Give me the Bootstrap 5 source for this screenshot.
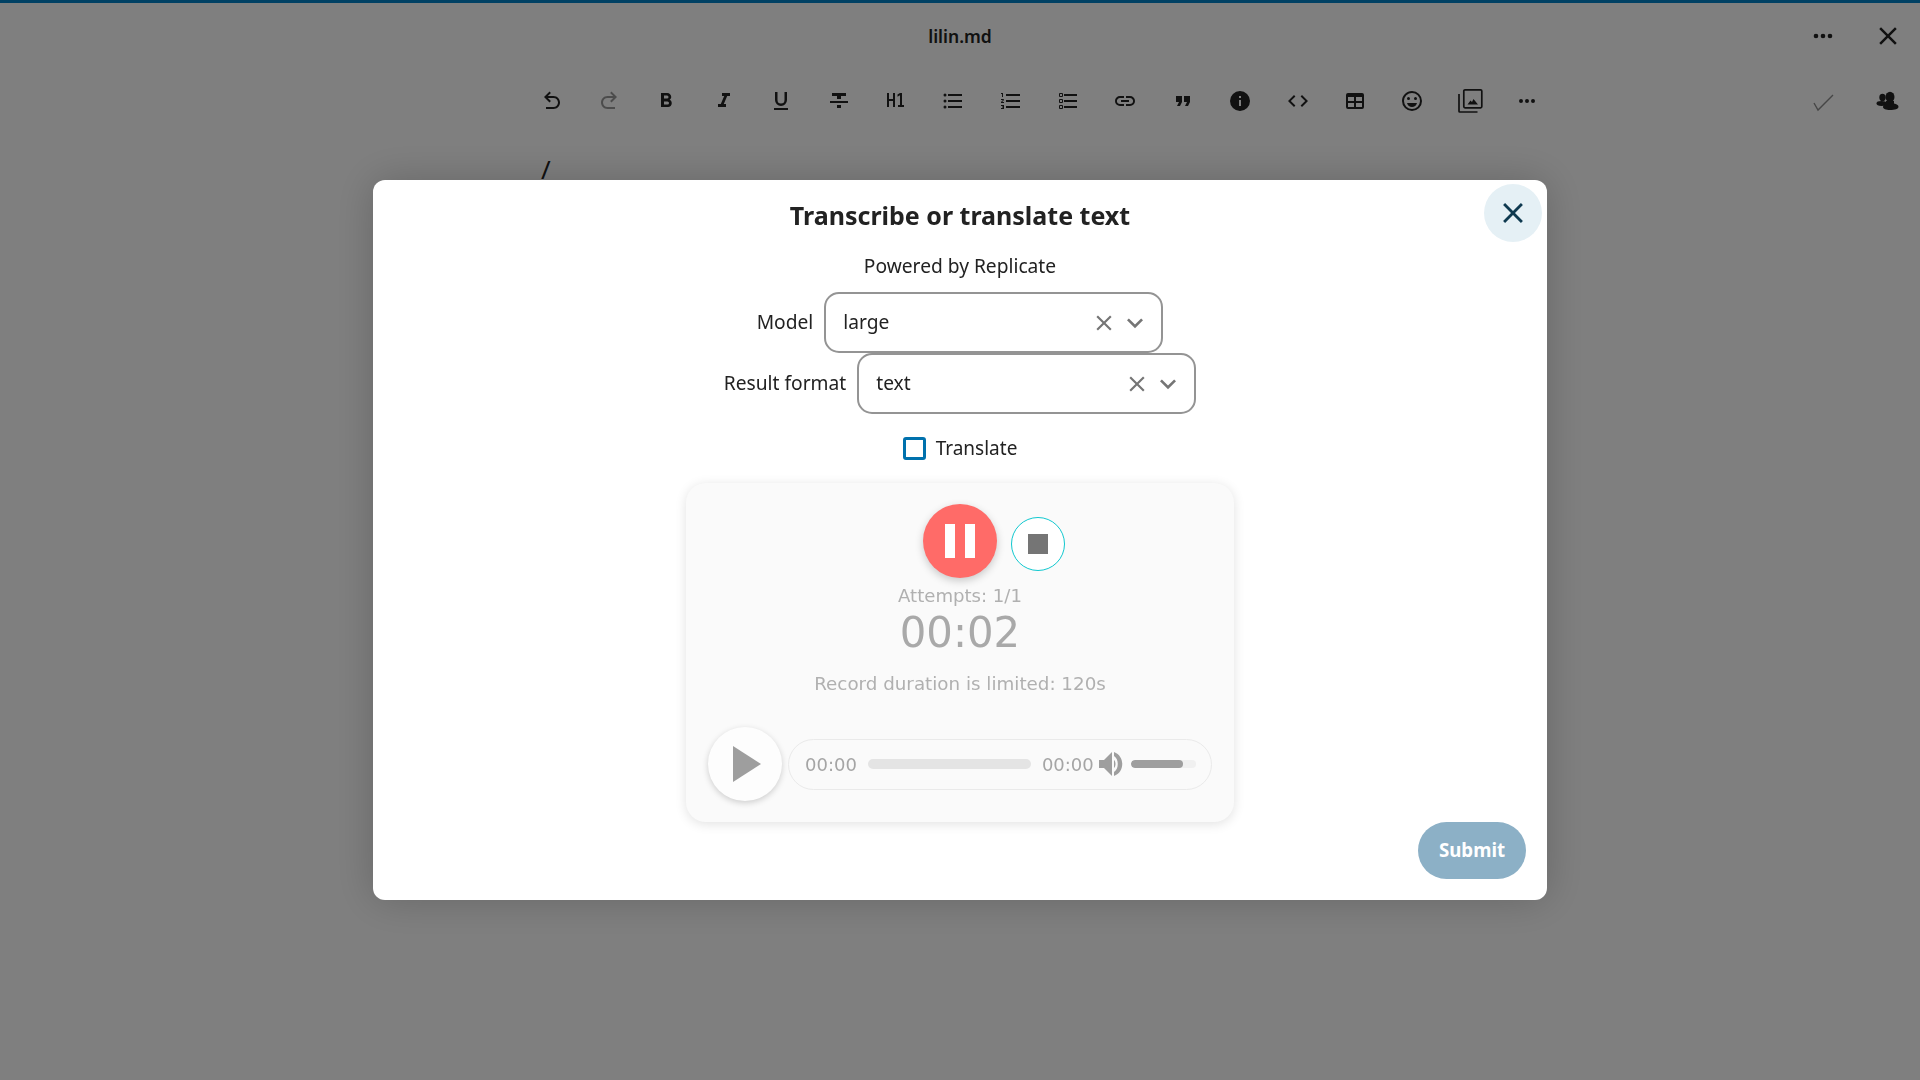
<!DOCTYPE html>
<html lang="en">
<head>
<meta charset="utf-8">
<title>lilin.md</title>
<link rel="stylesheet" href="https://cdn.jsdelivr.net/npm/bootstrap@5.3.0/dist/css/bootstrap.min.css">
<style>
body{font-family:"Noto Sans","Liberation Sans",sans-serif;background:#fff;color:#222;height:1080px;overflow:hidden}
.top-strip{height:3px;background:#0082c9}
.title-row{height:66px;display:grid;grid-template-columns:1fr auto 1fr;align-items:center}
.doc-name{font-weight:600;font-size:17.5px}
.tool-row{height:62px;padding-left:523px;padding-top:2px}
.tool-btn{width:57.38px;height:44px;display:flex;align-items:center;justify-content:center;flex:none}
.tool-btn svg{width:24px;height:24px;fill:#222}
.tool-btn.faded svg{fill:#999}
.tool-btn .frame-icon{width:26px;height:26px;fill:none;stroke:#222;stroke-width:1.7}
.frame-icon .peak{fill:#222;stroke:none}
.side-btn{width:64px;height:44px;display:flex;align-items:center;justify-content:center}
.side-btn svg{width:24px;height:24px;fill:#222}
.side-btn .big{width:30px;height:30px}
.side-btn .dots{width:28px;height:28px;margin-right:2px}
.side-btn .tick{fill:none;stroke:#8c8c8c;stroke-width:1.4}
.editor-line{padding-left:541px;font-size:26px;line-height:36px;margin-top:20px}
.backdrop-layer{position:fixed;inset:0;background:rgba(0,0,0,.5);display:flex;align-items:center;justify-content:center}
.dialog-box{position:relative;width:1174px;height:720px;background:#fff;border-radius:12px;box-shadow:0 0 40px rgba(0,0,0,.2);padding-top:17px;text-align:center}
.close-round{position:absolute;top:4px;right:5px;width:58px;height:58px;border:0;border-radius:50%;background:#e5f0f5;display:flex;align-items:center;justify-content:center;padding:0}
.close-round svg{width:34px;height:34px;fill:#0f3a50}
.dialog-title{font-size:25px;line-height:36px;font-weight:700;margin:0;color:#222}
.powered{font-size:19.2px;line-height:30px;margin-top:18px}
.form-line{display:flex;justify-content:center;align-items:center;gap:11px;font-size:19.2px}
.form-line.first-line{margin-top:11px}
.fake-select{width:339px;height:61px;border:2px solid #949494;border-radius:15px;display:flex;align-items:center;padding:0 10px 0 17px;text-align:left}
.fake-select .val{flex:1}
.fake-select svg{width:26px;height:26px;fill:#757575}
.fake-select .chev{margin-left:2px;width:32px;height:32px}
.trans-line{display:flex;justify-content:center;align-items:center;gap:10px;height:24px;margin-top:22px;font-size:19px}
.box-check{width:23px;height:23px;border:3px solid #0071ad;border-radius:3px;background:#fff}
.rec-card{width:548px;height:339px;margin:23px auto 0;background:#fafafa;border-radius:20px;box-shadow:0 2px 12px rgba(0,0,0,.12);padding:21px 22px;font-family:"DejaVu Sans",sans-serif;color:#aaa}
.rec-top{display:grid;grid-template-columns:1fr auto 1fr;align-items:start}
.pause-btn{width:74px;height:74px;border-radius:50%;background:#ff6b68;display:flex;align-items:center;justify-content:center;gap:10px;box-shadow:0 3px 8px rgba(0,0,0,.2)}
.pause-btn i{display:block;width:10px;height:34px;background:#fff}
.stop-btn{width:54px;height:54px;border-radius:50%;border:1px solid #10c8cf;background:#fff;margin:13px 0 0 14px;display:flex;align-items:center;justify-content:center}
.stop-btn i{display:block;width:19.5px;height:19.5px;background:#757575}
.attempts{font-size:18.1px;line-height:22px;margin-top:7px;color:#b0b0b0}
.timer{font-size:41.8px;line-height:48px;margin-top:2px;color:#a9a9a9}
.limit{font-size:18.3px;line-height:24px;margin-top:15px;color:#b0b0b0}
.player{display:flex;align-items:center;gap:6px;margin-top:31px;height:74px}
.play-round{width:74px;height:74px;flex:none;border-radius:50%;background:#fdfdfd;box-shadow:0 2px 6px rgba(0,0,0,.18);display:flex;align-items:center;justify-content:center}
.play-round svg{width:30px;height:36px;fill:#9e9e9e;margin-left:6px}
.track-pill{flex:1;height:51px;border:1px solid #eaeaea;border-radius:26px;display:flex;align-items:center;padding:0 15px 0 16px;font-size:18px;color:#a5a5a5}
.seek{width:163px;height:10px;flex:none;border-radius:5px;background:#e4e4e4;margin:0 11px 0 11px}
.speaker{width:24px;height:26px;flex:none;margin-left:5px;fill:#9e9e9e}
.vol{width:65px;height:8px;flex:none;border-radius:4px;background:#f0f0f0;margin-left:8px;overflow:hidden}
.vol i{display:block;height:100%;border-radius:4px;background:#9e9e9e}
.foot-line{display:flex;justify-content:flex-end;padding-right:21px}
.submit-pill{width:108px;height:57px;border:0;border-radius:29px;background:#8cb0c6;color:#fff;font-weight:700;font-size:18.7px;padding:0}
</style>
</head>
<body>
<div class="top-strip"></div>
<div class="title-row">
  <div></div>
  <div class="doc-name">lilin.md</div>
  <div class="d-flex justify-content-end">
    <div class="side-btn"><svg class="dots" viewBox="0 0 24 24"><path d="M16,12A2,2 0 0,1 18,10A2,2 0 0,1 20,12A2,2 0 0,1 18,14A2,2 0 0,1 16,12M10,12A2,2 0 0,1 12,10A2,2 0 0,1 14,12A2,2 0 0,1 12,14A2,2 0 0,1 10,12M4,12A2,2 0 0,1 6,10A2,2 0 0,1 8,12A2,2 0 0,1 6,14A2,2 0 0,1 4,12Z"/></svg></div>
    <div class="side-btn"><svg class="big" viewBox="0 0 24 24"><path d="M19,6.41L17.59,5L12,10.59L6.41,5L5,6.41L10.59,12L5,17.59L6.41,19L12,13.41L17.59,19L19,17.59L13.41,12L19,6.41Z"/></svg></div>
  </div>
</div>
<div class="tool-row d-flex align-items-center">
  <div class="tool-btn"><svg viewBox="0 0 24 24"><path d="M20 13.5C20 17.09 17.09 20 13.5 20H6V18H13.5C16 18 18 16 18 13.5S16 9 13.5 9H7.83L10.91 12.09L9.5 13.5L4 8L9.5 2.5L10.92 3.91L7.83 7H13.5C17.09 7 20 9.91 20 13.5Z"/></svg></div>
  <div class="tool-btn faded"><svg viewBox="0 0 24 24"><path d="M10.5 18H18V20H10.5C6.91 20 4 17.09 4 13.5S6.91 7 10.5 7H16.17L13.08 3.91L14.5 2.5L20 8L14.5 13.5L13.09 12.09L16.17 9H10.5C8 9 6 11 6 13.5S8 18 10.5 18Z"/></svg></div>
  <div class="tool-btn"><svg viewBox="0 0 24 24"><path d="M13.5,15.5H10V12.5H13.5A1.5,1.5 0 0,1 15,14A1.5,1.5 0 0,1 13.5,15.5M10,6.5H13A1.5,1.5 0 0,1 14.5,8A1.5,1.5 0 0,1 13,9.5H10M15.6,10.79C16.57,10.11 17.25,9 17.25,8C17.25,5.74 15.5,4 13.25,4H7V18H14.04C16.14,18 17.75,16.3 17.75,14.21C17.75,12.69 16.89,11.39 15.6,10.79Z"/></svg></div>
  <div class="tool-btn"><svg viewBox="0 0 24 24"><path d="M10,4V7H12.21L8.79,15H6V18H14V15H11.79L15.21,7H18V4H10Z"/></svg></div>
  <div class="tool-btn"><svg viewBox="0 0 24 24"><path d="M5,21H19V19H5V21M12,17A6,6 0 0,0 18,11V3H15.5V11A3.5,3.5 0 0,1 12,14.5A3.5,3.5 0 0,1 8.5,11V3H6V11A6,6 0 0,0 12,17Z"/></svg></div>
  <div class="tool-btn"><svg viewBox="0 0 24 24"><path d="M3 14H21V12H3M5 4V7H10V10H14V7H19V4M10 19H14V16H10V19Z"/></svg></div>
  <div class="tool-btn"><svg viewBox="0 0 24 24"><path d="M3,4H5V10H9V4H11V18H9V12H5V18H3V4M14,18V16H16V6.31L13.5,7.75V5.44L16,4H18V16H20V18H14Z"/></svg></div>
  <div class="tool-btn"><svg viewBox="0 0 24 24"><path d="M7,5H21V7H7V5M7,13V11H21V13H7M4,4.5A1.5,1.5 0 0,1 5.5,6A1.5,1.5 0 0,1 4,7.5A1.5,1.5 0 0,1 2.5,6A1.5,1.5 0 0,1 4,4.5M4,10.5A1.5,1.5 0 0,1 5.5,12A1.5,1.5 0 0,1 4,13.5A1.5,1.5 0 0,1 2.5,12A1.5,1.5 0 0,1 4,10.5M7,19V17H21V19H7M4,16.5A1.5,1.5 0 0,1 5.5,18A1.5,1.5 0 0,1 4,19.5A1.5,1.5 0 0,1 2.5,18A1.5,1.5 0 0,1 4,16.5Z"/></svg></div>
  <div class="tool-btn"><svg viewBox="0 0 24 24"><path d="M7,13V11H21V13H7M7,19V17H21V19H7M7,7V5H21V7H7M3,8V5H2V4H4V8H3M2,17V16H5V20H2V19H4V18.5H3V17.5H4V17H2M4.25,10A0.75,0.75 0 0,1 5,10.75C5,10.95 4.92,11.14 4.79,11.27L3.12,13H5V14H2V13.08L4,11H2V10H4.25Z"/></svg></div>
  <div class="tool-btn"><svg viewBox="0 0 24 24"><path d="M21,19V17H8V19H21M21,13V11H8V13H21M8,7H21V5H8V7M4,5V7H6V5H4M3,5A1,1 0 0,1 4,4H6A1,1 0 0,1 7,5V7A1,1 0 0,1 6,8H4A1,1 0 0,1 3,7V5M4,11V13H6V11H4M3,11A1,1 0 0,1 4,10H6A1,1 0 0,1 7,11V13A1,1 0 0,1 6,14H4A1,1 0 0,1 3,13V11M4,17V19H6V17H4M3,17A1,1 0 0,1 4,16H6A1,1 0 0,1 7,17V19A1,1 0 0,1 6,20H4A1,1 0 0,1 3,19V17Z"/></svg></div>
  <div class="tool-btn"><svg viewBox="0 0 24 24"><path d="M3.9,12C3.9,10.29 5.29,8.9 7,8.9H11V7H7A5,5 0 0,0 2,12A5,5 0 0,0 7,17H11V15.1H7C5.29,15.1 3.9,13.71 3.9,12M8,13H16V11H8V13M17,7H13V8.9H17C18.71,8.9 20.1,10.29 20.1,12C20.1,13.71 18.71,15.1 17,15.1H13V17H17A5,5 0 0,0 22,12A5,5 0 0,0 17,7Z"/></svg></div>
  <div class="tool-btn"><svg viewBox="0 0 24 24"><path d="M14,17H17L19,13V7H13V13H16M6,17H9L11,13V7H5V13H8L6,17Z"/></svg></div>
  <div class="tool-btn"><svg viewBox="0 0 24 24"><path d="M13,9H11V7H13M13,17H11V11H13M12,2A10,10 0 0,0 2,12A10,10 0 0,0 12,22A10,10 0 0,0 22,12A10,10 0 0,0 12,2Z"/></svg></div>
  <div class="tool-btn"><svg viewBox="0 0 24 24"><path d="M14.6,16.6L19.2,12L14.6,7.4L16,6L22,12L16,18L14.6,16.6M9.4,16.6L4.8,12L9.4,7.4L8,6L2,12L8,18L9.4,16.6Z"/></svg></div>
  <div class="tool-btn"><svg viewBox="0 0 24 24"><path d="M5,4H19A2,2 0 0,1 21,6V18A2,2 0 0,1 19,20H5A2,2 0 0,1 3,18V6A2,2 0 0,1 5,4M5,8V12H11V8H5M13,8V12H19V8H13M5,14V18H11V14H5M13,14V18H19V14H13Z"/></svg></div>
  <div class="tool-btn"><svg viewBox="0 0 24 24"><path d="M12,2C6.47,2 2,6.5 2,12A10,10 0 0,0 12,22A10,10 0 0,0 22,12A10,10 0 0,0 12,2M12,20A8,8 0 0,1 4,12A8,8 0 0,1 12,4A8,8 0 0,1 20,12A8,8 0 0,1 12,20M17,14H7C7.7,16.4 9.6,18 12,18S16.3,16.4 17,14M8.5,11A1.5,1.5 0 0,0 10,9.5A1.5,1.5 0 0,0 8.5,8A1.5,1.5 0 0,0 7,9.5A1.5,1.5 0 0,0 8.5,11M15.5,11A1.5,1.5 0 0,0 17,9.5A1.5,1.5 0 0,0 15.5,8A1.5,1.5 0 0,0 14,9.5A1.5,1.5 0 0,0 15.5,11Z"/></svg></div>
  <div class="tool-btn"><svg class="frame-icon" viewBox="0 0 26 26"><rect x="6.8" y="1.8" width="18" height="18" rx="1.2"/><path d="M2 6V23.2C2 23.7 2.3 24 2.8 24H20.5"/><path class="peak" d="M10.5 16.5L13.5 12.5L15 14L16.5 11L21 16.5Z"/></svg></div>
  <div class="tool-btn"><svg viewBox="0 0 24 24"><path d="M16,12A2,2 0 0,1 18,10A2,2 0 0,1 20,12A2,2 0 0,1 18,14A2,2 0 0,1 16,12M10,12A2,2 0 0,1 12,10A2,2 0 0,1 14,12A2,2 0 0,1 12,14A2,2 0 0,1 10,12M4,12A2,2 0 0,1 6,10A2,2 0 0,1 8,12A2,2 0 0,1 6,14A2,2 0 0,1 4,12Z"/></svg></div>
  <div class="ms-auto d-flex">
    <div class="side-btn"><svg class="tick" viewBox="0 0 24 24"><path d="M2 14L6 21L21 6"/></svg></div>
    <div class="side-btn"><svg viewBox="0 0 24 24"><ellipse cx="6.5" cy="8.5" rx="3.2" ry="3.7"/><ellipse cx="5.5" cy="14.5" rx="5" ry="2.4"/><ellipse cx="14" cy="8" rx="4.5" ry="5.2"/><path d="M10 12H18V14.5C20.5 15 22.5 16 22.5 17.7C22.5 20 19 21 14 21C10 21 7 20 7 18C7 16 8.5 15 10 14.5Z"/></svg></div>
  </div>
</div>
<div class="editor-line">/</div>

<div class="backdrop-layer">
  <div class="dialog-box">
    <button class="close-round" type="button" aria-label="Close"><svg viewBox="0 0 24 24"><path d="M19,6.41L17.59,5L12,10.59L6.41,5L5,6.41L10.59,12L5,17.59L6.41,19L12,13.41L17.59,19L19,17.59L13.41,12L19,6.41Z"/></svg></button>
    <h2 class="dialog-title">Transcribe or translate text</h2>
    <div class="powered">Powered by Replicate</div>
    <div class="form-line first-line">
      <span>Model</span>
      <div class="fake-select"><span class="val">large</span><svg viewBox="0 0 24 24"><path d="M19,6.41L17.59,5L12,10.59L6.41,5L5,6.41L10.59,12L5,17.59L6.41,19L12,13.41L17.59,19L19,17.59L13.41,12L19,6.41Z"/></svg><svg class="chev" viewBox="0 0 24 24"><path d="M7.41,8.58L12,13.17L16.59,8.58L18,10L12,16L6,10L7.41,8.58Z"/></svg></div>
    </div>
    <div class="form-line">
      <span>Result format</span>
      <div class="fake-select"><span class="val">text</span><svg viewBox="0 0 24 24"><path d="M19,6.41L17.59,5L12,10.59L6.41,5L5,6.41L10.59,12L5,17.59L6.41,19L12,13.41L17.59,19L19,17.59L13.41,12L19,6.41Z"/></svg><svg class="chev" viewBox="0 0 24 24"><path d="M7.41,8.58L12,13.17L16.59,8.58L18,10L12,16L6,10L7.41,8.58Z"/></svg></div>
    </div>
    <div class="trans-line"><span class="box-check"></span><span>Translate</span></div>
    <div class="rec-card">
      <div class="rec-top">
        <div></div>
        <div class="pause-btn"><i></i><i></i></div>
        <div class="d-flex"><div class="stop-btn"><i></i></div></div>
      </div>
      <div class="attempts">Attempts: 1/1</div>
      <div class="timer">00:02</div>
      <div class="limit">Record duration is limited: 120s</div>
      <div class="player">
        <div class="play-round"><svg viewBox="0 0 30 36"><path d="M0 0L28 18L0 36Z"/></svg></div>
        <div class="track-pill">
          <span>00:00</span><div class="seek"></div><span>00:00</span>
          <svg class="speaker" viewBox="0 0 24 26"><path d="M0 9H5L13 1V25L5 17H0Z M15 1C26 5 26 21 15 25L15 21C20 18 20 8 15 5Z M15 9C17 11 17 15 15 17Z"/></svg>
          <div class="vol"><i style="width:80%"></i></div>
        </div>
      </div>
    </div>
    <div class="foot-line"><button class="submit-pill" type="button">Submit</button></div>
  </div>
</div>
<script src="https://cdn.jsdelivr.net/npm/bootstrap@5.3.0/dist/js/bootstrap.bundle.min.js"></script>
</body>
</html>
